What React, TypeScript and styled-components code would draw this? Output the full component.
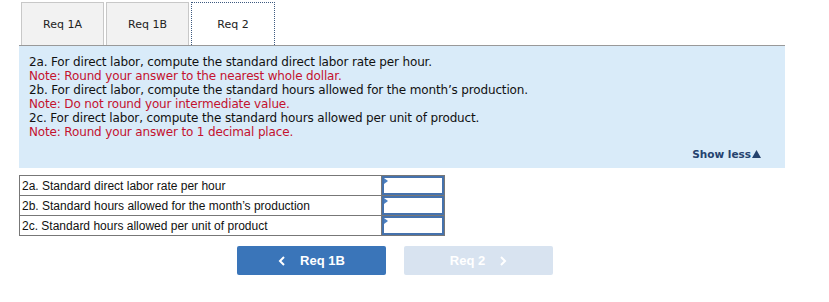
import React from "react";
import styled, { createGlobalStyle } from "styled-components";

const GlobalStyle = createGlobalStyle`
  body {
    margin: 0;
    background: #ffffff;
    font-family: "DejaVu Sans", Verdana, sans-serif;
  }
`;

const Page = styled.div`
  width: 766px;
  padding: 2px 0 0 19px;
`;

const TabBar = styled.div`
  display: flex;
  gap: 2px;
  padding-left: 2px;
  border-bottom: 1px solid #999999;
`;

const Tab = styled.div<{ active?: boolean }>`
  width: ${({ active }) => (active ? "82px" : "81px")};
  height: 42px;
  display: flex;
  align-items: center;
  justify-content: center;
  font-size: 11px;
  color: #222222;
  background: ${({ active }) => (active ? "#ffffff" : "#f2f2f2")};
  border: ${({ active }) => (active ? "1px dotted #3d5a80" : "1px solid #c8c8c8")};
  border-bottom: none;
  margin-bottom: ${({ active }) => (active ? "-1px" : "0")};
  box-sizing: content-box;
`;

const Panel = styled.div`
  background: #d9ebf9;
  height: 122px;
  padding: 9px 10px 0;
  box-sizing: border-box;
  position: relative;
  font-size: 12px;
  line-height: 14px;
`;

const Line = styled.div<{ note?: boolean }>`
  color: ${({ note }) => (note ? "#c4122f" : "#111111")};
  letter-spacing: -0.15px;
`;

const ShowLess = styled.div`
  position: absolute;
  right: 24px;
  bottom: 7px;
  font-size: 10.5px;
  font-weight: bold;
  color: #24426e;
  display: flex;
  align-items: center;
  gap: 1px;
`;

const Table = styled.table`
  margin-top: 7px;
  border-collapse: collapse;
  width: 426px;
  font-family: "Liberation Sans", Arial, sans-serif;
  font-size: 12px;
`;

const LabelCell = styled.td`
  border: 1px solid #777777;
  height: 19px;
  padding: 0 2px;
  color: #111111;
  width: 357px;
`;

const InputCell = styled.td`
  border: 1px solid #777777;
  padding: 0;
  position: relative;
`;

const Input = styled.div`
  height: 15px;
  border: 2px solid #4572ad;
  position: relative;
`;

const Flag = styled.span`
  position: absolute;
  top: 0;
  left: 0;
  width: 0;
  height: 0;
  border-top: 3px solid transparent;
  border-bottom: 3px solid transparent;
  border-left: 4px solid #4a7fc1;
`;

const Nav = styled.div`
  display: flex;
  gap: 18px;
  margin: 10px 0 0 218px;
`;

const NavButton = styled.button<{ disabled?: boolean }>`
  width: 149px;
  height: 29px;
  border: none;
  border-radius: 2px;
  background: ${({ disabled }) => (disabled ? "#d8e3f0" : "#3a75b9")};
  color: #ffffff;
  font-family: "Liberation Sans", Arial, sans-serif;
  font-weight: bold;
  font-size: 13px;
  display: flex;
  align-items: center;
  justify-content: center;
  gap: 14px;
  padding: 0;
`;

const Chevron = ({ dir }: { dir: "left" | "right" }) => (
  <svg width="8" height="10" viewBox="0 0 8 10">
    <path
      d={dir === "left" ? "M6 1 L2 5 L6 9" : "M2 1 L6 5 L2 9"}
      fill="none"
      stroke="#ffffff"
      strokeWidth="2"
    />
  </svg>
);

const rows = [
  "2a. Standard direct labor rate per hour",
  "2b. Standard hours allowed for the month\u2019s production",
  "2c. Standard hours allowed per unit of product",
];

const App = () => {
  return (
    <>
      <GlobalStyle />
      <Page>
        <TabBar>
          <Tab>Req 1A</Tab>
          <Tab>Req 1B</Tab>
          <Tab active>Req 2</Tab>
        </TabBar>
        <Panel>
          <Line>2a. For direct labor, compute the standard direct labor rate per hour.</Line>
          <Line note>Note: Round your answer to the nearest whole dollar.</Line>
          <Line>2b. For direct labor, compute the standard hours allowed for the month’s production.</Line>
          <Line note>Note: Do not round your intermediate value.</Line>
          <Line>2c. For direct labor, compute the standard hours allowed per unit of product.</Line>
          <Line note>Note: Round your answer to 1 decimal place.</Line>
          <ShowLess>
            Show less
            <svg width="9" height="8" viewBox="0 0 9 8">
              <path d="M4.5 0 L9 8 L0 8 Z" fill="#24426e" />
            </svg>
          </ShowLess>
        </Panel>
        <Table>
          <tbody>
            {rows.map((r) => (
              <tr key={r}>
                <LabelCell>{r}</LabelCell>
                <InputCell>
                  <Input>
                    <Flag />
                  </Input>
                </InputCell>
              </tr>
            ))}
          </tbody>
        </Table>
        <Nav>
          <NavButton>
            <Chevron dir="left" />
            Req 1B
          </NavButton>
          <NavButton disabled>
            Req 2
            <Chevron dir="right" />
          </NavButton>
        </Nav>
      </Page>
    </>
  );
};

export default App;
